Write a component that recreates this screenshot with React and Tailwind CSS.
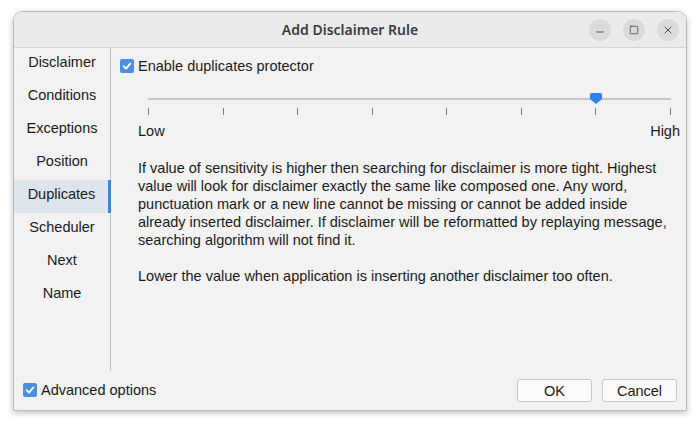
import { Minus, Square, X } from "lucide-react";

const tabs = ["Disclaimer", "Conditions", "Exceptions", "Position", "Duplicates", "Scheduler", "Next", "Name"];

function Check() {
  return (
    <span className="flex h-[14px] w-[14px] shrink-0 items-center justify-center rounded-[2px] bg-[#4a8fe0]">
      <svg width="10" height="10" viewBox="0 0 10 10">
        <path d="M1.6 5.2 L4 7.6 L8.4 2.4" fill="none" stroke="white" strokeWidth="1.8" strokeLinecap="round" strokeLinejoin="round" />
      </svg>
    </span>
  );
}

function Slider() {
  const ticks = [0, 1, 2, 3, 4, 5, 6, 7];
  return (
    <div className="relative ml-[10px] h-[28px] w-[523px]">
      <div className="absolute left-0 right-0 top-[8px] h-[2px] bg-[#c6c6c6]" />
      <div className="absolute left-0 right-0 top-[18px] flex justify-between">
        {ticks.map((t) => (
          <div key={t} className="h-[7px] w-px bg-[#7c7c7c]" />
        ))}
      </div>
      <svg className="absolute left-[442px] top-[3px]" width="12" height="11" viewBox="0 0 12 11">
        <path d="M0 1.5 Q0 0 1.5 0 H10.5 Q12 0 12 1.5 V6 L6 11 L0 6 Z" fill="#2a84e6" />
      </svg>
    </div>
  );
}

export default function App() {
  return (
    <div className="h-[428px] w-[700px] bg-white pl-[13px] pt-[11px]" style={{ fontFamily: '"Liberation Sans", Arial, sans-serif' }}>
      <div className="flex h-[400px] w-[674px] flex-col overflow-hidden rounded-t-[10px] border border-[#bcbcbc] shadow-[0_2px_6px_rgba(0,0,0,0.25)]">
        {/* title bar */}
        <div className="relative flex h-[36px] shrink-0 items-center justify-center border-b border-[#d4d4d4] bg-[#ebebeb]">
          <span className="text-[14px] font-semibold text-[#3c3c3c]" style={{ fontFamily: '"Noto Sans", sans-serif' }}>
            Add Disclaimer Rule
          </span>
          <div className="absolute right-[7px] top-[7px] flex gap-[12px]">
            <span className="flex h-[22px] w-[22px] items-center justify-center rounded-full bg-[#dadada] pt-[4px]">
              <Minus size={12} strokeWidth={1.6} color="#2e2e2e" />
            </span>
            <span className="flex h-[22px] w-[22px] items-center justify-center rounded-full bg-[#dadada]">
              <Square size={10} strokeWidth={1.6} color="#2e2e2e" />
            </span>
            <span className="flex h-[22px] w-[22px] items-center justify-center rounded-full bg-[#dadada]">
              <X size={12} strokeWidth={1.6} color="#2e2e2e" />
            </span>
          </div>
        </div>

        {/* body */}
        <div className="flex flex-1 flex-col bg-[#f2f2f2] text-[14.5px] text-[#1a1a1a]">
          <div className="flex h-[323px]">
            <div className="w-[97px] shrink-0 border-r border-[#c4c4c4]">
              {tabs.map((t) => (
                <div
                  key={t}
                  className={
                    t === "Duplicates"
                      ? "flex h-[33px] items-center justify-center border-r-[3px] border-[#3d86d0] bg-[#dde4ec] pb-[4px] pl-[1px] -mr-px"
                      : "flex h-[33px] items-center justify-center pb-[4px]"
                  }
                >
                  {t}
                </div>
              ))}
            </div>

            <div className="flex-1 pt-[11px]">
              <div className="flex h-[14px] items-center gap-[4px] pl-[9px]">
                <Check />
                <span className="leading-[18px]">Enable duplicates protector</span>
              </div>

              <div className="mt-[17px] pl-[27px]">
                <Slider />
                <div className="mt-[4px] flex w-[542px] justify-between leading-[18px]">
                  <span>Low</span>
                  <span>High</span>
                </div>
                <div className="mt-[19px] w-[538px] leading-[18px]">
                  <p>
                    If value of sensitivity is higher then searching for disclaimer is more tight. Highest value will look for
                    disclaimer exactly the same like composed one. Any word, punctuation mark or a new line cannot be missing or
                    cannot be added inside already inserted disclaimer. If disclaimer will be reformatted by replaying message,
                    searching algorithm will not find it.
                  </p>
                  <p className="mt-[18px]">Lower the value when application is inserting another disclaimer too often.</p>
                </div>
              </div>
            </div>
          </div>

          {/* bottom bar */}
          <div className="flex flex-1 items-start justify-between pl-[9px] pr-[9px] pt-[8px]">
            <div className="mt-[2px] flex items-center gap-[4px]">
              <Check />
              <span className="leading-[18px]">Advanced options</span>
            </div>
            <div className="flex gap-[10px]">
              <button className="h-[23px] w-[75px] rounded-[3px] border border-[#c8c8c8] bg-[#fbfbfb] leading-[18px]">OK</button>
              <button className="h-[23px] w-[75px] rounded-[3px] border border-[#c8c8c8] bg-[#fbfbfb] leading-[18px]">Cancel</button>
            </div>
          </div>
        </div>
      </div>
    </div>
  );
}
